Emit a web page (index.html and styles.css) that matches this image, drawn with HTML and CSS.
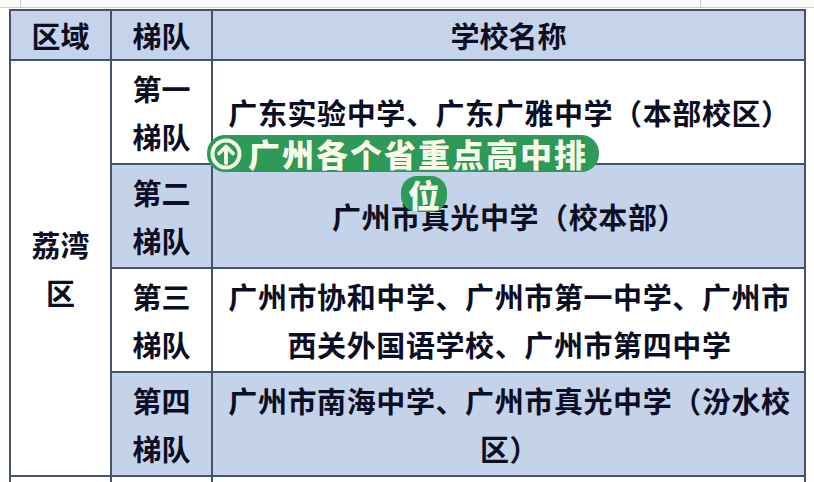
FILE: index.html
```html
<!DOCTYPE html>
<html lang="zh">
<head>
<meta charset="utf-8">
<link rel="stylesheet" href="styles.css">
</head>
<body>
<div class="page">
  <div class="topstrip"><span class="tick t1"></span><span class="tick t2"></span></div>
  <div class="wrap">
    <table class="grid">
      <colgroup><col class="c1"><col class="c2"><col class="c3"></colgroup>
      <thead>
        <tr class="head"><th>区域</th><th>梯队</th><th>学校名称</th></tr>
      </thead>
      <tbody>
        <tr class="row">
          <td class="area" rowspan="4">荔湾<br>区</td>
          <td class="tier">第一<br>梯队</td>
          <td class="school">广东实验中学、广东广雅中学（本部校区）</td>
        </tr>
        <tr class="row alt">
          <td class="tier">第二<br>梯队</td>
          <td class="school">广州市真光中学（校本部）</td>
        </tr>
        <tr class="row">
          <td class="tier">第三<br>梯队</td>
          <td class="school">广州市协和中学、广州市第一中学、广州市西关外国语学校、广州市第四中学</td>
        </tr>
        <tr class="row alt">
          <td class="tier">第四<br>梯队</td>
          <td class="school">广州市南海中学、广州市真光中学（汾水校区）</td>
        </tr>
        <tr class="tail"><td></td><td></td><td></td></tr>
      </tbody>
    </table>
    <div class="sticker">
      <div class="band">
        <span class="badge">
          <svg viewBox="0 0 32 32" width="32" height="32">
            <circle cx="16" cy="16" r="13.5" fill="#2e9a58" stroke="#f6fae6" stroke-width="4"/>
            <path d="M16 25 V9.5 M9 15.5 L16 8.5 L23 15.5" fill="none" stroke="#f6fae6" stroke-width="3.8" stroke-linecap="round" stroke-linejoin="round"/>
          </svg>
        </span>
        <span class="stext">广州各个省重点高中排</span>
      </div>
      <div class="band2"><span class="stext">位</span></div>
    </div>
  </div>
</div>
</body>
</html>
```

FILE: styles.css
```css
html, body {
  margin: 0;
  padding: 0;
  background: #ffffff;
}
.page {
  width: 814px;
  height: 482px;
  overflow: hidden;
  font-family: "Noto Sans CJK SC", "Noto Sans", sans-serif;
}
.topstrip {
  position: relative;
  height: 7px;
  background: #fbfbf8;
  border-bottom: 1px solid #cfcfcf;
}
.tick {
  position: absolute;
  top: 0;
  width: 1px;
  height: 7px;
  background: #cfcfcf;
}
.t1 { left: 20px; }
.t2 { left: 700px; }
.wrap {
  position: relative;
  margin: 1px 0 0 9px;
}
.grid {
  border-collapse: collapse;
  table-layout: fixed;
  width: 795px;
  color: #0c0e24;
}
.c1 { width: 101px; }
.c2 { width: 101px; }
.c3 { width: 593px; }
.grid th, .grid td {
  border: 2px solid #46546a;
  text-align: center;
  font-weight: 700;
  font-size: 29px;
  line-height: 48px;
  padding: 0;
}
.head th {
  height: 48px;
  background: #c6d4eb;
  line-height: 48px;
}
.row td {
  height: 102px;
  vertical-align: middle;
}
.row td.school {
  padding: 0 6px 0 8px;
  letter-spacing: 0.6px;
}
.area {
  background: #ffffff;
}
.alt td {
  background: #c4d2ea;
}
.alt td.area {
  background: #ffffff;
}
.tail td {
  height: 20px;
  border-bottom: none;
}
.sticker {
  position: absolute;
  left: 198px;
  top: 126px;
  width: 392px;
}
.band {
  display: flex;
  align-items: center;
  gap: 6px;
  height: 37px;
  width: 392px;
  padding-left: 3px;
  box-sizing: border-box;
  background: #2e9a58;
  border-radius: 18px;
}
.badge {
  display: flex;
  width: 32px;
  height: 32px;
}
.stext {
  font-family: "Noto Sans CJK SC", sans-serif;
  font-weight: 900;
  font-size: 32px;
  line-height: 37px;
  color: #f6fae6;
  letter-spacing: 2px;
  text-shadow: 0 0 1px #1f7a44;
}
.band2 {
  margin: 4px 0 0 194px;
  width: 46px;
  height: 36px;
  background: #2e9a58;
  border-radius: 16px;
  display: flex;
  justify-content: center;
}
.band2 .stext {
  letter-spacing: 0;
  line-height: 36px;
}
```
